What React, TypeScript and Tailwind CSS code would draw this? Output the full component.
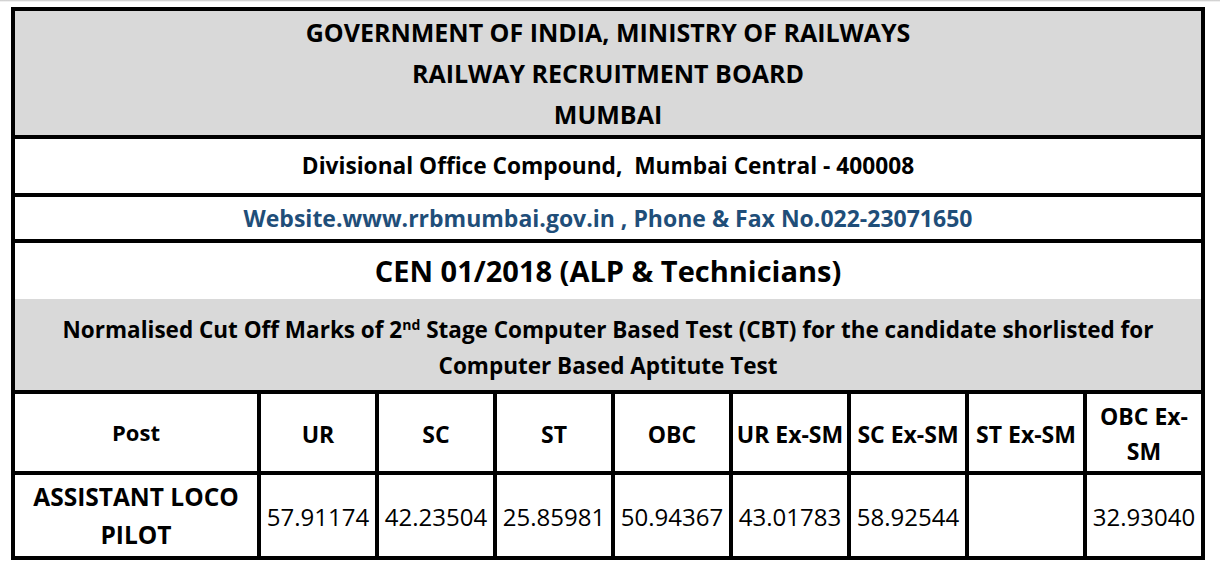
import React from "react";

const headers: { label: React.ReactNode }[] = [
  { label: "UR" },
  { label: "SC" },
  { label: "ST" },
  { label: "OBC" },
  { label: "UR Ex-SM" },
  { label: "SC Ex-SM" },
  { label: "ST Ex-SM" },
  {
    label: (
      <>
        OBC Ex-
        <br />
        SM
      </>
    ),
  },
];

const values = [
  "57.91174",
  "42.23504",
  "25.85981",
  "50.94367",
  "43.01783",
  "58.92544",
  "",
  "32.93040",
];

export default function App() {
  return (
    <div
      className="min-h-[577px] w-[1220px] bg-white text-black"
      style={{ fontFamily: '"Open Sans", "Noto Sans", sans-serif' }}
    >
      <div className="h-[2px] bg-gradient-to-b from-[#c4c4c4] to-white" />
      <div className="ml-[11px] mt-[5px] flex w-[1194px] flex-col gap-[4px] border-4 border-black bg-black">
        <div className="flex h-[124px] flex-col items-center justify-center bg-[#d9d9d9] text-[25px] font-bold leading-[41px]">
          <div>GOVERNMENT OF INDIA, MINISTRY OF RAILWAYS</div>
          <div>RAILWAY RECRUITMENT BOARD</div>
          <div>MUMBAI</div>
        </div>
        <div className="flex h-[54px] items-center justify-center bg-white text-[22.7px] font-bold">
          Divisional Office Compound,&nbsp; Mumbai Central - 400008
        </div>
        <div className="flex h-[42px] items-center justify-center bg-white text-[23px] font-bold text-[#1f4e79]">
          Website.www.rrbmumbai.gov.in , Phone &amp; Fax No.022-23071650
        </div>
        <div className="flex flex-col">
          <div className="flex h-[56px] items-center justify-center bg-white text-[29px] font-bold">
            CEN 01/2018 (ALP &amp; Technicians)
          </div>
          <div className="flex h-[91px] flex-col items-center bg-[#d9d9d9] pt-[13px] text-[22.5px] font-bold leading-[36px]">
            <div className="whitespace-nowrap">
              Normalised Cut Off Marks of 2
              <sup className="top-[-0.6em] text-[14px]">nd</sup> Stage Computer
              Based Test (CBT) for the candidate shorlisted for
            </div>
            <div>Computer Based Aptitute Test</div>
          </div>
        </div>
        <div className="grid h-[77px] grid-cols-[242px_repeat(8,1fr)] gap-[4px]">
          <div className="flex items-center justify-center bg-white text-[22px] font-bold">
            Post
          </div>
          {headers.map((h, i) => (
            <div
              key={i}
              className="flex items-center justify-center whitespace-nowrap bg-white pt-[3px] text-center text-[23px] font-bold leading-[35px]"
            >
              <div>{h.label}</div>
            </div>
          ))}
        </div>
        <div className="grid h-[81px] grid-cols-[242px_repeat(8,1fr)] gap-[4px]">
          <div className="flex flex-col items-center justify-center bg-white text-center text-[24.5px] font-bold leading-[38px]">
            <div>ASSISTANT LOCO</div>
            <div>PILOT</div>
          </div>
          {values.map((v, i) => (
            <div
              key={i}
              className="flex items-center justify-center bg-white pt-[3px] text-[24px]"
            >
              {v}
            </div>
          ))}
        </div>
      </div>
    </div>
  );
}
